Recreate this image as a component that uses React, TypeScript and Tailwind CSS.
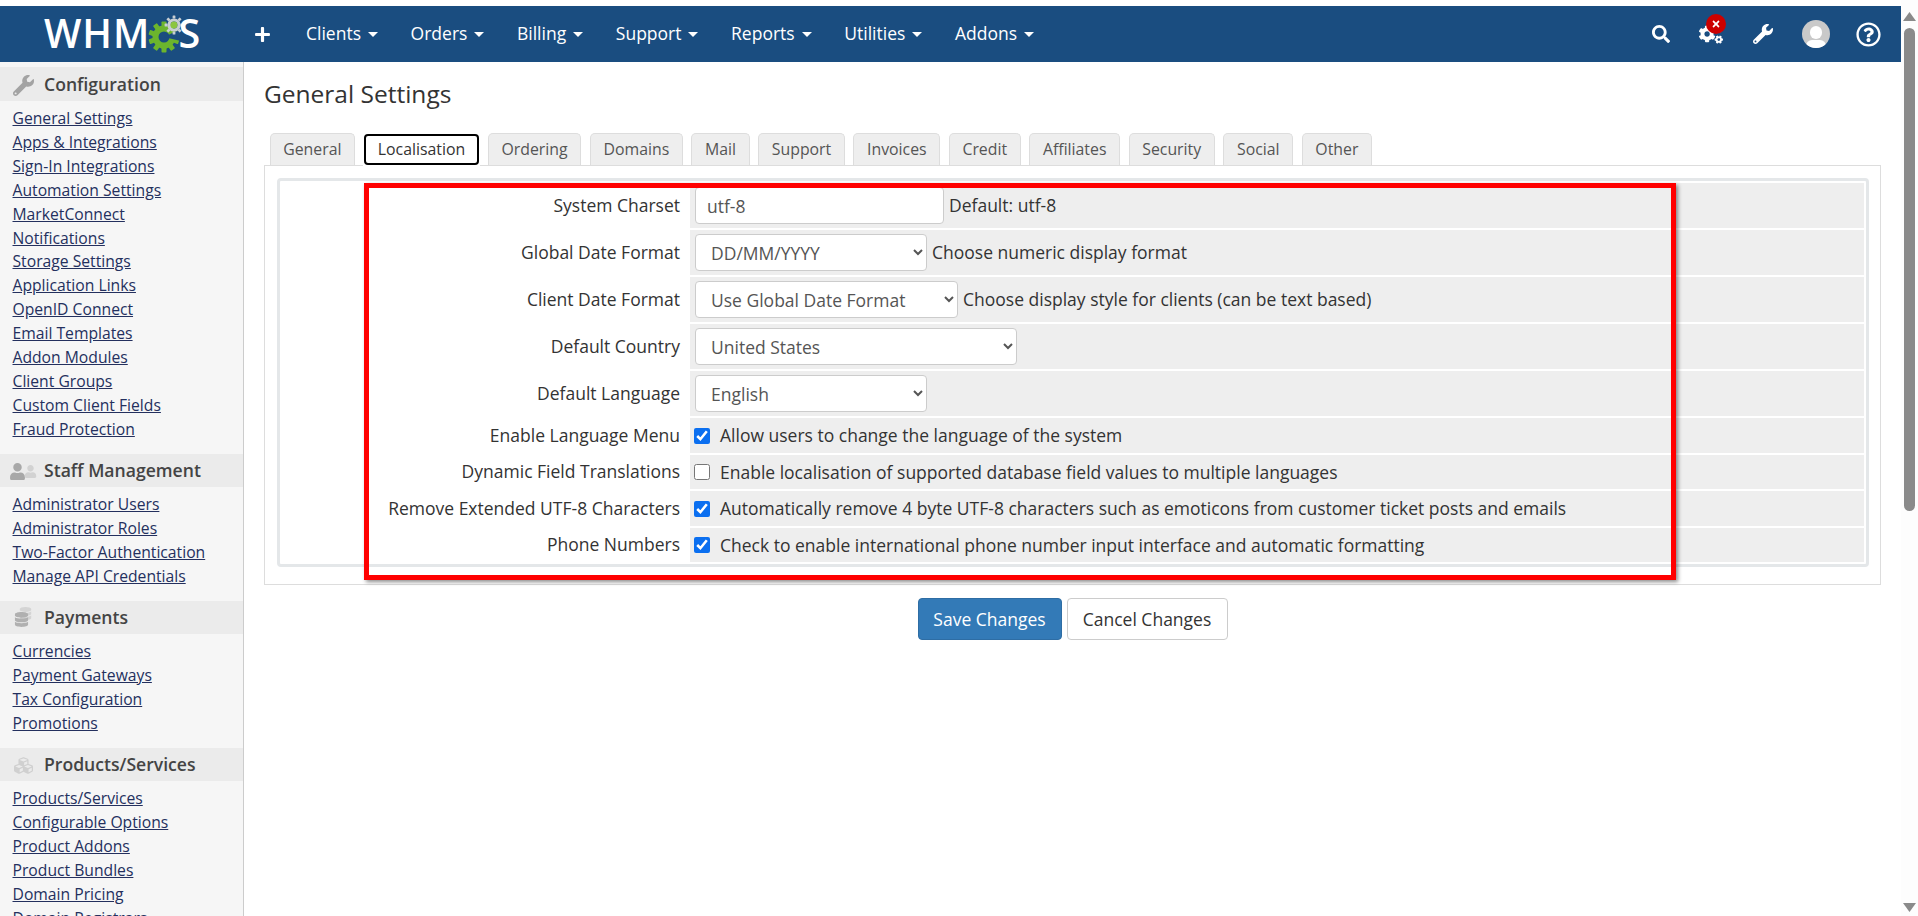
import React from "react";
import { FaSearch, FaCogs, FaWrench, FaRegQuestionCircle, FaUser, FaDatabase, FaCubes, FaPlus, FaTimes } from "react-icons/fa";

const sections: { title: string; icon: React.ReactNode; items: string[]; head: string; mt: string; ul: string; lh: string }[] = [
  {
    title: "Configuration",
    icon: <FaWrench className="text-[21px] text-[#a3a3a3]" />,
    head: "h-[34px]",
    mt: "mt-[5px]",
    ul: "mt-[6px]",
    lh: "leading-[23.9px]",
    items: ["General Settings","Apps & Integrations","Sign-In Integrations","Automation Settings","MarketConnect","Notifications","Storage Settings","Application Links","OpenID Connect","Email Templates","Addon Modules","Client Groups","Custom Client Fields","Fraud Protection"],
  },
  {
    title: "Staff Management",
    icon: (
      <span className="flex items-center">
        <FaUser className="text-[17px] text-[#a8a8a8]" />
        <FaUser className="text-[13px] text-[#d2d2d2] ml-[-2px]" />
      </span>
    ),
    head: "h-[33px]",
    mt: "mt-[12px]",
    ul: "mt-[5px]",
    lh: "leading-[24px]",
    items: ["Administrator Users","Administrator Roles","Two-Factor Authentication","Manage API Credentials"],
  },
  {
    title: "Payments",
    icon: (
      <span className="relative flex w-[18px] h-[18px]">
        <FaDatabase className="absolute left-[5px] top-[-2px] text-[13px] text-[#d4d4d4]" />
        <FaDatabase className="absolute left-0 top-[3px] text-[15px] text-[#b0b0b0]" />
      </span>
    ),
    head: "h-[33px]",
    mt: "mt-[13px]",
    ul: "mt-[5px]",
    lh: "leading-[24px]",
    items: ["Currencies","Payment Gateways","Tax Configuration","Promotions"],
  },
  {
    title: "Products/Services",
    icon: <FaCubes className="text-[19px] text-[#d0d0d0]" />,
    head: "h-[33px]",
    mt: "mt-[13px]",
    ul: "mt-[5px]",
    lh: "leading-[24px]",
    items: ["Products/Services","Configurable Options","Product Addons","Product Bundles","Domain Pricing","Domain Registrars"],
  },
];

const navs = ["Clients","Orders","Billing","Support","Reports","Utilities","Addons"];
const tabs = ["General","Localisation","Ordering","Domains","Mail","Support","Invoices","Credit","Affiliates","Security","Social","Other"];

function Row({ label, tall, children }: { label: string; tall?: boolean; children: React.ReactNode }) {
  return (
    <div className={`flex gap-[2px] ${tall ? "h-[45px]" : "h-[34.5px]"}`}>
      <div className={`w-[408px] flex justify-end pr-[8px] ${tall ? "pt-[9px]" : "items-center pb-[1px]"}`}>{label}</div>
      <div className="flex-1 bg-[#eeeeee] flex items-center pl-[5px]">{children}</div>
    </div>
  );
}

function Select({ value, w }: { value: string; w: string }) {
  return (
    <select
      defaultValue={value}
      className={`${w} h-[37px] bg-white border border-[#cccccc] rounded-[4px] pl-[11px] text-[#555555] text-[17.5px] mr-[5px]`}
    >
      <option>{value}</option>
    </select>
  );
}

function Check({ on, text }: { on: boolean; text: string }) {
  return (
    <label className="flex items-center">
      <input type="checkbox" defaultChecked={on} className="w-[16px] h-[16px] ml-[-1px] mr-[10px] mt-[1px] accent-[#0b6ff0]" />
      <span>{text}</span>
    </label>
  );
}

function LogoGear() {
  const big = Array.from({ length: 10 }, (_, i) => i * 36);
  const small = Array.from({ length: 8 }, (_, i) => i * 45);
  return (
    <svg width="38" height="38" viewBox="0 0 38 38" className="shrink-0 overflow-visible">
      <g fill="#6cb52d">
        {big.map((a) => (
          <rect key={a} x="14.5" y="6.5" width="5" height="5" rx="0.8" transform={`rotate(${a} 17 22)`} />
        ))}
      </g>
      <circle cx="17" cy="22" r="8.5" fill="none" stroke="#6cb52d" strokeWidth="6" />
      <path d="M17 22 L38 12 L38 27 Z" fill="#1a4d80" />
      <g fill="#c8ced2">
        {small.map((a) => (
          <rect key={a} x="25.6" y="0.6" width="2.8" height="3" rx="0.5" transform={`rotate(${a} 27 10)`} />
        ))}
      </g>
      <circle cx="27" cy="10" r="5" fill="none" stroke="#c8ced2" strokeWidth="3.2" />
      <circle cx="27" cy="10" r="3.4" fill="#8cc63f" />
    </svg>
  );
}

export default function App() {
  return (
    <div className="h-[916px] w-[1918px] overflow-hidden flex bg-white font-['Open_Sans',sans-serif] text-[17.5px] text-[#333333]">
      <div className="w-[1901px] pt-[6px] relative">
        <header className="h-[56px] bg-[#1a4d80] flex items-center text-white">
          <div className="w-[44px]" />
          <div className="w-[156px] h-[40px] flex items-center text-[39.5px] font-semibold tracking-[1px] leading-none whitespace-nowrap">
            <span>WHM</span>
            <span className="ml-[-3px]"><LogoGear /></span>
            <span className="ml-[-7px]">S</span>
          </div>
          <FaPlus className="ml-[54px] text-[17px]" />
          <nav className="ml-[35px] flex gap-[32.6px] text-[17.5px] pb-[2px]">
            {navs.map((n) => (
              <span key={n} className="flex items-center gap-[7px] whitespace-nowrap">
                {n}
                <span className="w-0 h-0 border-x-[5px] border-x-transparent border-t-[5px] border-t-white mt-[3px]" />
              </span>
            ))}
          </nav>
          <div className="ml-auto flex items-center">
            <FaSearch className="text-[18px]" />
            <span className="ml-[29px] relative flex">
              <FaCogs className="text-[24px]" />
              <span className="absolute left-[7px] top-[-8px] w-[20px] h-[20px] rounded-full bg-[#cc0000] flex items-center justify-center">
                <FaTimes className="text-[10px]" />
              </span>
            </span>
            <FaWrench className="ml-[30px] text-[20px]" />
            <span className="ml-[29px] w-[28px] h-[28px] rounded-full bg-[#c9c9c9] overflow-hidden relative">
              <span className="absolute left-[8px] top-[6px] w-[12px] h-[13px] rounded-full bg-white" />
              <span className="absolute left-[4px] top-[20px] w-[20px] h-[12px] rounded-full bg-white" />
            </span>
            <FaRegQuestionCircle className="ml-[26px] mr-[20px] text-[25px]" />
          </div>
        </header>

        <div className="flex h-[854px]">
          <aside className="w-[244px] shrink-0 bg-[#f6f6f6] border-r border-[#cccccc] text-[15.7px]">
            {sections.map((s) => (
              <div key={s.title} className={s.mt}>
                <div className={`${s.head} pt-[2px] bg-[#ebebeb] flex items-center text-[17.6px] leading-none font-semibold text-[#444444]`}>
                  <span className="w-[44px] flex justify-center pl-[8px] pr-[6px]">{s.icon}</span>
                  {s.title}
                </div>
                <ul className={`${s.ul} pl-[12.5px] ${s.lh}`}>
                  {s.items.map((i) => (
                    <li key={i}>
                      <a href="#" className="text-[#24305e] underline">{i}</a>
                    </li>
                  ))}
                </ul>
              </div>
            ))}
          </aside>

          <main className="flex-1 px-[20px]">
            <h1 className="text-[24.5px] font-normal leading-[32px] pt-[16px] text-[#333333]">General Settings</h1>
            <div className="mt-[23px] ml-[5.5px] flex text-[15.85px] gap-[8.4px] h-[33px] relative z-10">
              {tabs.map((t) =>
                t === "Localisation" ? (
                  <span key={t} className="h-[33px] bg-white px-[1px] py-[1px] -mx-[1px]">
                    <span className="h-full flex items-center px-[12.2px] border-2 border-black rounded-[4px] text-[#333333]">{t}</span>
                  </span>
                ) : (
                  <span key={t} className="h-[32px] flex items-center px-[12.7px] bg-[#eeeeee] border border-b-0 border-[#dddddd] rounded-t-[5px] text-[#555555]">{t}</span>
                )
              )}
            </div>
            <div className="border border-[#dddddd] pl-[12px] pr-[11px] pt-[12px] pb-[17px] -mt-[1px]">
              <div className="border-[3px] border-[#e4e7e9] rounded-[4px] pt-[2px] pr-[2px] flex flex-col gap-[2px] pb-[2px]">
                <Row label="System Charset" tall>
                  <input defaultValue="utf-8" className="w-[249px] h-[37px] bg-white border border-[#cccccc] rounded-[4px] px-[11px] text-[#555555] mr-[5px]" />
                  Default: utf-8
                </Row>
                <Row label="Global Date Format" tall>
                  <Select value="DD/MM/YYYY" w="w-[232px]" />
                  Choose numeric display format
                </Row>
                <Row label="Client Date Format" tall>
                  <Select value="Use Global Date Format" w="w-[263px]" />
                  Choose display style for clients (can be text based)
                </Row>
                <Row label="Default Country" tall>
                  <Select value="United States" w="w-[322px]" />
                </Row>
                <Row label="Default Language" tall>
                  <Select value="English" w="w-[232px]" />
                </Row>
                <Row label="Enable Language Menu">
                  <Check on text="Allow users to change the language of the system" />
                </Row>
                <Row label="Dynamic Field Translations">
                  <Check on={false} text="Enable localisation of supported database field values to multiple languages" />
                </Row>
                <Row label="Remove Extended UTF-8 Characters">
                  <Check on text="Automatically remove 4 byte UTF-8 characters such as emoticons from customer ticket posts and emails" />
                </Row>
                <Row label="Phone Numbers">
                  <Check on text="Check to enable international phone number input interface and automatic formatting" />
                </Row>
              </div>
            </div>
            <div className="mt-[13px] flex justify-center gap-[5px]">
              <button className="w-[144px] h-[42px] bg-[#337ab7] border border-[#2e6da4] rounded-[4px] text-white">Save Changes</button>
              <button className="w-[161px] h-[42px] bg-white border border-[#cccccc] rounded-[4px] text-[#333333]">Cancel Changes</button>
            </div>
          </main>
        </div>

        <div className="absolute left-[364px] top-[183px] w-[1312px] h-[397px] border-[5.5px] border-[#ff0000] shadow-[2px_2px_4px_rgba(0,0,0,0.45)] pointer-events-none" />
      </div>

      <div className="w-[17px] h-[916px] flex flex-col items-center bg-[#fdfdfd]">
        <svg width="13" height="9" viewBox="0 0 13 9" className="mt-[12px]"><path d="M6.5 0 13 9H0z" fill="#8a8a8a" /></svg>
        <div className="w-[11px] h-[483px] mt-[7px] rounded-[6px] bg-[#8a8a8a]" />
        <div className="flex-1" />
        <svg width="13" height="9" viewBox="0 0 13 9" className="mb-[4px]"><path d="M6.5 9 13 0H0z" fill="#8a8a8a" /></svg>
      </div>
    </div>
  );
}
